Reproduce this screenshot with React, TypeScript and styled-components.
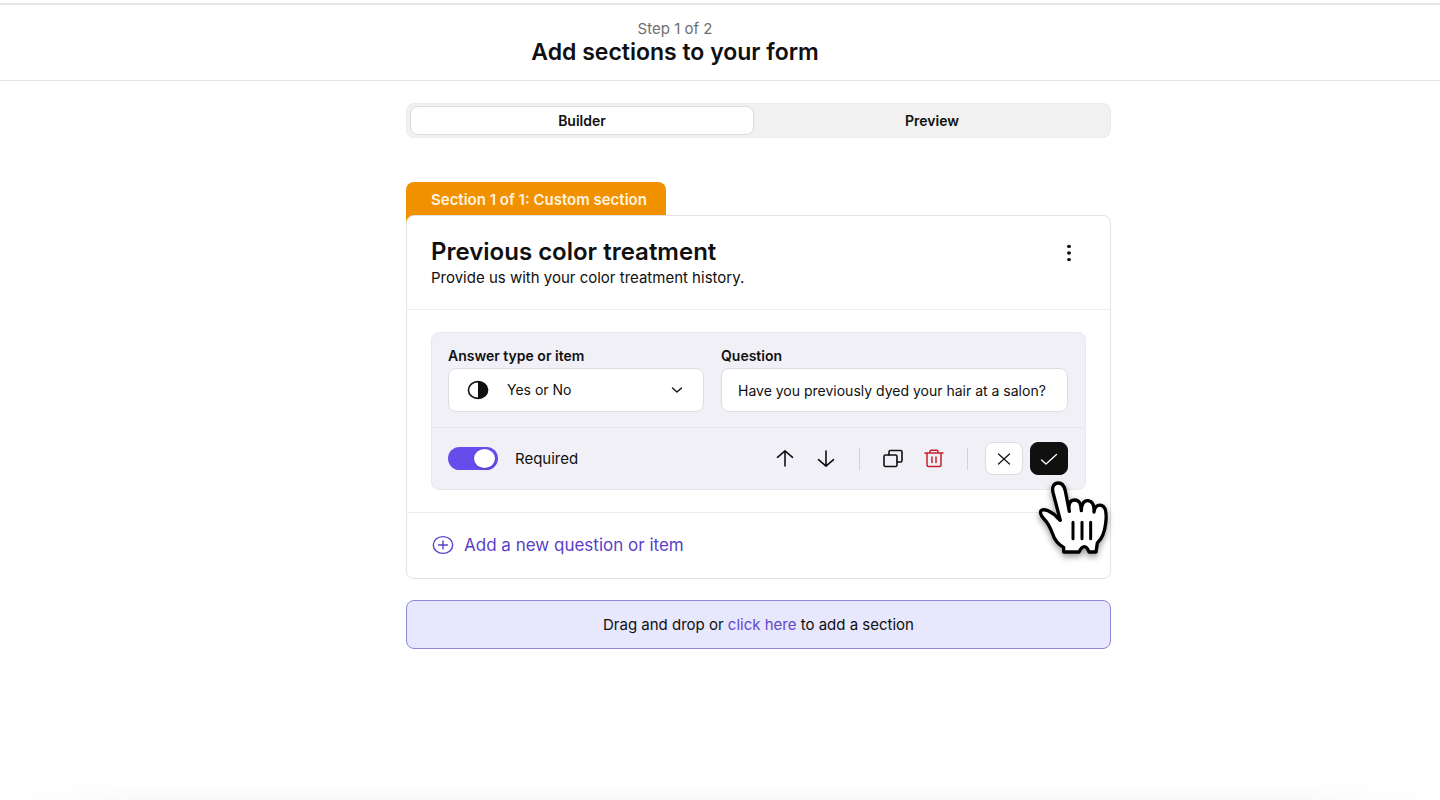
import React, { useState } from 'react';
import styled, { createGlobalStyle } from 'styled-components';

const GlobalStyle = createGlobalStyle`
  * { box-sizing: border-box; }
  html, body, #root { height: 100%; }
  body {
    margin: 0;
    background: #fff;
    color: #101010;
    font-family: Inter, "Liberation Sans", sans-serif;
    font-size: 15px;
    line-height: 20px;
  }
  button, input, select { font: inherit; color: inherit; }
  h1, h2, p { margin: 0; }
`;

const Page = styled.div`
  min-height: 100%;
  padding-top: 3px;
  display: flex;
  flex-direction: column;
`;

const Header = styled.header`
  padding: 14px 90px 14px 0;
  border-top: 2px solid #e6e6e6;
  border-bottom: 1px solid #e2e2e2;
  text-align: center;
`;

const Step = styled.p`
  color: #6e6e6e;
`;

const Title = styled.h1`
  font-size: 23px;
  line-height: 27px;
  font-weight: 600;
`;

const Main = styled.main`
  flex: 1;
  display: flex;
  justify-content: center;
  padding: 22px 0 40px 77px;
`;

const Column = styled.div`
  width: 100%;
  max-width: 705px;
`;

const Tabs = styled.div`
  display: grid;
  grid-template-columns: 344px 1fr;
  gap: 3px;
  height: 35px;
  padding: 2px 3px;
  background: #f1f1f1;
  border: 1px solid #ebebeb;
  border-radius: 8px;
`;

const Tab = styled.button<{ $active?: boolean }>`
  padding: 0;
  font-weight: 600;
  font-size: 14px;
  border-radius: 8px;
  border: 1px solid ${(p) => (p.$active ? '#dcdcdc' : 'transparent')};
  background: ${(p) => (p.$active ? '#fff' : 'transparent')};
`;

const SectionTag = styled.div`
  width: 260px;
  height: 42px;
  margin: 44px 0 -9px;
  padding: 8px 25px;
  border-radius: 8px 8px 0 0;
  background: #f29100;
  color: #fff3df;
  font-weight: 600;
  white-space: nowrap;
`;

const Card = styled.section`
  position: relative;
  background: #fff;
  border: 1px solid #e2e2e4;
  border-radius: 8px;
`;

const CardHeader = styled.div`
  display: flex;
  justify-content: space-between;
  align-items: flex-start;
  padding: 22px 31px 21px 24px;
  border-bottom: 1px solid #ededed;
`;

const CardTitle = styled.h2`
  margin-bottom: 2px;
  font-size: 24px;
  line-height: 28px;
  font-weight: 600;
`;

const IconButton = styled.button`
  display: flex;
  align-items: center;
  justify-content: center;
  width: 20px;
  height: 24px;
  padding: 0;
  border: 0;
  background: none;
`;

const MenuButton = styled(IconButton)`
  margin-top: 3px;
`;

const CardBody = styled.div`
  padding: 22px 24px;
  border-bottom: 1px solid #ededed;
`;

const Question = styled.div`
  background: #f1f0f7;
  border: 1px solid #e9e8ef;
  border-radius: 8px;
`;

const Fields = styled.div`
  display: grid;
  grid-template-columns: 256px 1fr;
  gap: 17px;
  padding: 13px 17px 15px 16px;
  border-bottom: 1px solid #e6e5ec;
`;

const Field = styled.div`
  display: flex;
  flex-direction: column;
  gap: 2px;
  min-width: 0;
  font-size: 14px;
`;

const Label = styled.label`
  font-weight: 600;
`;

const SelectBox = styled.div`
  position: relative;
`;

const Select = styled.select`
  appearance: none;
  display: block;
  width: 100%;
  height: 44px;
  padding: 0 40px 0 58px;
  background: #fff;
  border: 1px solid #dddce3;
  border-radius: 8px;
`;

const FieldIcon = styled.svg<{ $side: 'left' | 'right' }>`
  position: absolute;
  top: 0;
  bottom: 0;
  ${(p) => p.$side}: 19px;
  margin: auto 0;
  pointer-events: none;
`;

const TextInput = styled.input`
  width: 100%;
  height: 44px;
  padding: 0 16px;
  background: #fff;
  border: 1px solid #dddce3;
  border-radius: 8px;
`;

const Actions = styled.div`
  display: flex;
  align-items: center;
  justify-content: space-between;
  height: 61px;
  padding: 0 17px 0 16px;
`;

const Required = styled.label`
  display: flex;
  align-items: center;
  gap: 17px;
`;

const Switch = styled.input`
  appearance: none;
  display: flex;
  align-items: center;
  justify-content: flex-end;
  width: 50px;
  height: 23px;
  margin: 0;
  padding: 0 3px;
  border-radius: 12px;
  background: #674cec;

  &:not(:checked) {
    justify-content: flex-start;
    background: #b9b9c2;
  }

  &::before {
    content: '';
    width: 21px;
    height: 19px;
    border-radius: 50%;
    background: #fff;
    box-shadow: 0 1px 3px #0003;
  }
`;

const Tools = styled.div`
  display: flex;
  align-items: center;
`;

const ToolGroup = styled.div`
  display: flex;
  gap: 21px;
`;

const Divider = styled.span`
  width: 1px;
  height: 22px;
  margin: 0 23px;
  background: #d3d2d9;
`;

const EndDivider = styled(Divider)`
  margin-right: 17px;
`;

const Confirmation = styled.div`
  position: relative;
  display: flex;
  gap: 7px;
`;

const SquareButton = styled.button<{ $dark?: boolean }>`
  display: flex;
  align-items: center;
  justify-content: center;
  width: 38px;
  height: 33px;
  padding: 0;
  border-radius: 8px;
  border: 1px solid ${(p) => (p.$dark ? '#101010' : '#dddce3')};
  background: ${(p) => (p.$dark ? '#101010' : '#fff')};
  color: ${(p) => (p.$dark ? '#fff' : '#101010')};
`;

const Pointer = styled.svg`
  position: absolute;
  top: 38px;
  left: 52px;
  z-index: 1;
  overflow: visible;
  pointer-events: none;
  filter: drop-shadow(0 3px 3px #0006);
`;

const AddButton = styled.button`
  display: flex;
  align-items: center;
  gap: 10px;
  height: 65px;
  padding: 0 25px 2px;
  border: 0;
  background: none;
  color: #5a3fc8;
  font-size: 17px;
`;

const DropZone = styled.div`
  margin-top: 21px;
  padding: 14px 14px 13px;
  background: #e7e7fe;
  border: 1px solid #8f87d6;
  border-radius: 8px;
  text-align: center;
`;

const Link = styled.a`
  color: #6247c8;
  text-decoration: none;
`;

const Footer = styled.div`
  height: 18px;
  background:
    linear-gradient(90deg, #fff, #fff0 10%, #fff0 90%, #fff),
    linear-gradient(#fff, #f9f9f9);
`;

const line = {
  fill: 'none',
  stroke: 'currentColor',
  strokeLinecap: 'round',
  strokeLinejoin: 'round',
} as const;

const Hand = () => (
  <Pointer width="74" height="80" viewBox="50 150 222 240" aria-hidden="true">
    <path
      d="M130 366V352C112 342 102 328 97 312C90 293 83 279 71 267C60 256 57 244 65 240C77 236 90 245 101 253C108 259 113 266 120 271L98 187C94 168 102 159 114 159C126 159 132 168 135 183L147 244C143 224 149 210 162 210C176 209 183 222 183 242C183 222 191 211 203 212C217 213 222 226 221 246C222 231 231 223 243 226C259 230 259 256 256 280C253 307 246 325 231 339L227 366H206C203 358 198 350 192 350C186 350 180 358 176 366Z"
      fill="#fff"
      stroke="#000"
      strokeWidth="10"
      strokeLinejoin="round"
    />
    <path d="M158 277V326M185 277V326M211 277V326" fill="none" stroke="#000" strokeWidth="9" strokeLinecap="round" />
  </Pointer>
);

export default function App() {
  const [required, setRequired] = useState(true);
  const [question, setQuestion] = useState('Have you previously dyed your hair at a salon?');

  return (
    <>
      <GlobalStyle />
      <Page>
        <Header>
          <Step>Step 1 of 2</Step>
          <Title>Add sections to your form</Title>
        </Header>
        <Main>
          <Column>
            <Tabs role="tablist">
              <Tab role="tab" aria-selected="true" $active>Builder</Tab>
              <Tab role="tab" aria-selected="false">Preview</Tab>
            </Tabs>
            <SectionTag>Section 1 of 1: Custom section</SectionTag>
            <Card>
              <CardHeader>
                <div>
                  <CardTitle>Previous color treatment</CardTitle>
                  <p>Provide us with your color treatment history.</p>
                </div>
                <MenuButton aria-label="Section menu">
                  <svg width="6" height="18" viewBox="0 0 6 18" fill="currentColor">
                    <ellipse cx="3" cy="2.4" rx="2" ry="1.7" />
                    <ellipse cx="3" cy="9" rx="2" ry="1.7" />
                    <ellipse cx="3" cy="15.6" rx="2" ry="1.7" />
                  </svg>
                </MenuButton>
              </CardHeader>
              <CardBody>
                <Question>
                  <Fields>
                    <Field>
                      <Label htmlFor="answer-type">Answer type or item</Label>
                      <SelectBox>
                        <Select id="answer-type">
                          <option>Yes or No</option>
                        </Select>
                        <FieldIcon $side="left" width="22" height="20" viewBox="0 0 22 20">
                          <ellipse cx="11" cy="10" rx="9.6" ry="8.4" fill="none" stroke="#101010" strokeWidth="1.6" />
                          <path d="M11 1.6c5.3 0 9.6 3.8 9.6 8.4s-4.3 8.4-9.6 8.4z" fill="#101010" />
                        </FieldIcon>
                        <FieldIcon $side="right" width="16" height="10" viewBox="0 0 16 10" {...line} strokeWidth="1.4">
                          <path d="M3.5 3L8 7l4.5-4" />
                        </FieldIcon>
                      </SelectBox>
                    </Field>
                    <Field>
                      <Label htmlFor="question">Question</Label>
                      <TextInput id="question" value={question} onChange={(e) => setQuestion(e.target.value)} />
                    </Field>
                  </Fields>
                  <Actions>
                    <Required>
                      <Switch type="checkbox" checked={required} onChange={(e) => setRequired(e.target.checked)} />
                      Required
                    </Required>
                    <Tools>
                      <ToolGroup>
                        <IconButton aria-label="Move up">
                          <svg width="20" height="20" viewBox="0 0 20 20" {...line} strokeWidth="1.6">
                            <path d="M10 17V1.8M2.500 8.300L10 1.800L17.500 8.300" />
                          </svg>
                        </IconButton>
                        <IconButton aria-label="Move down">
                          <svg width="20" height="20" viewBox="0 0 20 20" {...line} strokeWidth="1.6">
                            <path d="M10 2V17.200M2.500 10.700L10 17.200L17.500 10.700" />
                          </svg>
                        </IconButton>
                      </ToolGroup>
                      <Divider />
                      <ToolGroup>
                        <IconButton aria-label="Duplicate">
                          <svg width="20" height="20" viewBox="0 0 20 20" {...line} strokeWidth="1.6">
                            <rect x="1" y="6" width="13" height="11.500" rx="1.500" />
                            <path d="M6 6V3Q6 1.500 7.500 1.500H17.500Q19 1.500 19 3V11.500Q19 13 17.500 13H14" />
                          </svg>
                        </IconButton>
                        <IconButton aria-label="Delete">
                          <svg width="20" height="20" viewBox="0 0 20 20" {...line} stroke="#c2202f" strokeWidth="1.5">
                            <path d="M1 4H19M3 4V16Q3 17.500 4.500 17.500H15.500Q17 17.500 17 16V4M6 4V2.300Q6 1.200 7.200 1.200H12.800Q14 1.200 14 2.300V4M8 8V13.500M12 8V13.500" />
                          </svg>
                        </IconButton>
                      </ToolGroup>
                      <EndDivider />
                      <Confirmation>
                        <SquareButton aria-label="Cancel">
                          <svg width="14" height="12" viewBox="0 0 14 12" {...line} strokeWidth="1.2">
                            <path d="M1.500 1L12.500 11M12.500 1L1.500 11" />
                          </svg>
                        </SquareButton>
                        <SquareButton aria-label="Save" $dark>
                          <svg width="18" height="12" viewBox="0 0 18 12" {...line} strokeWidth="1.3">
                            <path d="M1.500 7L6 11L16.500 1.500" />
                          </svg>
                        </SquareButton>
                        <Hand />
                      </Confirmation>
                    </Tools>
                  </Actions>
                </Question>
              </CardBody>
              <AddButton>
                <svg width="22" height="20" viewBox="0 0 22 20" {...line} strokeWidth="1.4">
                  <ellipse cx="11" cy="10" rx="9.700" ry="8.400" />
                  <path d="M6.500 10H15.500M11 6V14" />
                </svg>
                Add a new question or item
              </AddButton>
            </Card>
            <DropZone>
              Drag and drop or <Link href="#add-section">click here</Link> to add a section
            </DropZone>
          </Column>
        </Main>
        <Footer />
      </Page>
    </>
  );
}
